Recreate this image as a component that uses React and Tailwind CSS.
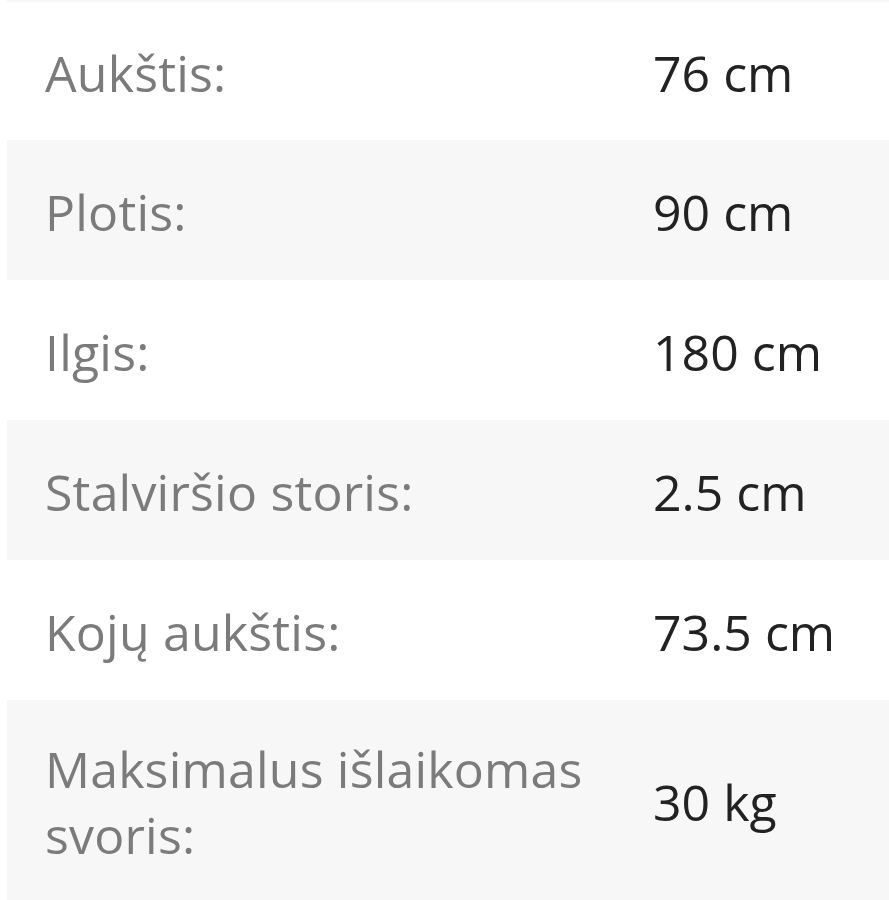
export default function App() {
  const rows = [
    { label: "Aukštis:", value: "76 cm" },
    { label: "Plotis:", value: "90 cm" },
    { label: "Ilgis:", value: "180 cm" },
    { label: "Stalviršio storis:", value: "2.5 cm" },
    { label: "Kojų aukštis:", value: "73.5 cm" },
    { label: "Maksimalus išlaikomas svoris:", value: "30 kg" },
  ];

  return (
    <div className="w-[889px] h-[900px] overflow-hidden bg-white pl-[7px] font-['Open_Sans',sans-serif]">
      <div className="h-[2px] bg-[#f6f6f7]" />
      <table className="w-full border-collapse">
        <tbody>
          {rows.map((row, i) => (
            <tr
              key={i}
              className={`${i % 2 === 1 ? "bg-[#f7f7f8]" : "bg-white"} ${i === 0 ? "h-[138px]" : i === rows.length - 1 ? "h-[200px]" : "h-[140px]"}`}
            >
              <td className="w-[608px] pl-[38px] pr-[10px] pt-[4px] text-[50px] leading-[66px] tracking-[0.2px] text-[#7b7b7b] align-middle">
                {row.label}
              </td>
              <td className="pl-[38px] pt-[4px] text-[50px] leading-[66px] text-[#222222] align-middle">
                {row.value}
              </td>
            </tr>
          ))}
        </tbody>
      </table>
    </div>
  );
}
